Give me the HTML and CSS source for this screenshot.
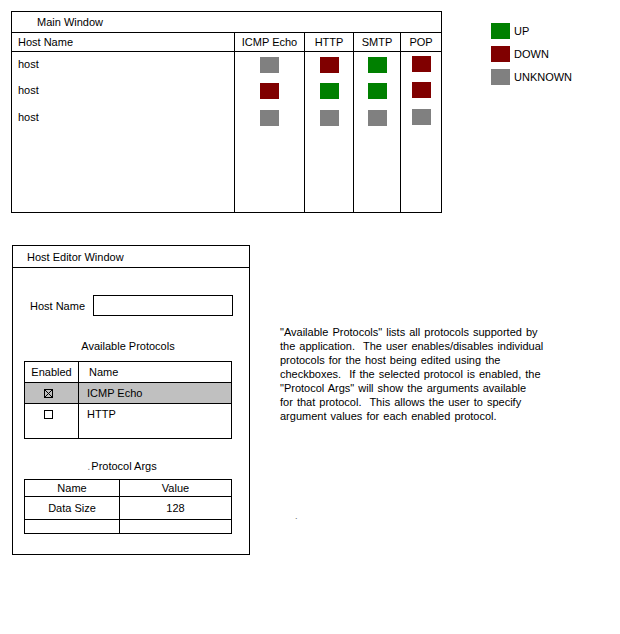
FILE: index.html
```html
<!DOCTYPE html>
<html lang="en">
<head>
    <meta charset="UTF-8">
    <title>Host Monitor Mockup</title>
    <link rel="stylesheet" href="styles.css">
</head>
<body>
    <div class="top">
        <div class="main-window">
            <div class="title main-title">Main Window</div>
            <div class="grid">
                <div class="col host-col">
                    <div class="head">Host Name</div>
                    <div class="cell">host</div>
                    <div class="cell">host</div>
                    <div class="cell">host</div>
                </div>
                <div class="col icmp-col">
                    <div class="head center">ICMP Echo</div>
                    <div class="cell center"><span class="status unknown"></span></div>
                    <div class="cell center"><span class="status down"></span></div>
                    <div class="cell center"><span class="status unknown"></span></div>
                </div>
                <div class="col http-col">
                    <div class="head center">HTTP</div>
                    <div class="cell center"><span class="status down"></span></div>
                    <div class="cell center"><span class="status up"></span></div>
                    <div class="cell center"><span class="status unknown"></span></div>
                </div>
                <div class="col smtp-col">
                    <div class="head center">SMTP</div>
                    <div class="cell center"><span class="status up"></span></div>
                    <div class="cell center"><span class="status up"></span></div>
                    <div class="cell center"><span class="status unknown"></span></div>
                </div>
                <div class="col pop-col">
                    <div class="head center">POP</div>
                    <div class="cell center"><span class="status down"></span></div>
                    <div class="cell center"><span class="status down"></span></div>
                    <div class="cell center"><span class="status unknown"></span></div>
                </div>
            </div>
        </div>

        <ul class="legend">
            <li><span class="swatch up"></span>UP</li>
            <li><span class="swatch down"></span>DOWN</li>
            <li><span class="swatch unknown"></span>UNKNOWN</li>
        </ul>
    </div>

    <div class="bottom">
        <div class="editor">
            <div class="title editor-title">Host Editor Window</div>
            <div class="editor-body">
                <div class="field">
                    <label class="field-label">Host Name</label>
                    <div class="input"></div>
                </div>

                <div class="caption protocols-caption">Available Protocols</div>
                <table class="protocols">
                    <tr class="thead">
                        <th class="enabled">Enabled</th>
                        <th class="name">Name</th>
                    </tr>
                    <tr class="selected">
                        <td class="enabled"><span class="check checked"></span></td>
                        <td class="name">ICMP Echo</td>
                    </tr>
                    <tr class="tall">
                        <td class="enabled"><span class="check"></span></td>
                        <td class="name">HTTP</td>
                    </tr>
                </table>

                <div class="caption args-caption"><span class="stray">.</span>Protocol Args</div>
                <table class="args">
                    <tr class="thead">
                        <th>Name</th>
                        <th>Value</th>
                    </tr>
                    <tr class="value-row">
                        <td>Data Size</td>
                        <td>128</td>
                    </tr>
                    <tr class="empty-row">
                        <td></td>
                        <td></td>
                    </tr>
                </table>
            </div>
        </div>

        <div class="notes">
            <p>
                "Available Protocols" lists all protocols supported by<br>
                the application.&nbsp; The user enables/disables individual<br>
                protocols for the host being edited using the<br>
                checkboxes.&nbsp; If the selected protocol is enabled, the<br>
                "Protocol Args" will show the arguments available<br>
                for that protocol.&nbsp; This allows the user to specify<br>
                argument values for each enabled protocol.
            </p>
            <span class="speck">.</span>
        </div>
    </div>
</body>
</html>
```

FILE: styles.css
```css
body {
    margin: 0;
    font-family: "Liberation Sans", Arial, sans-serif;
    font-size: 11px;
    line-height: 14px;
    color: #000;
    background: #fff;
}

/* status colours */
.up { background: #008000; }
.down { background: #800000; }
.unknown { background: #808080; }

.top {
    display: flex;
    align-items: flex-start;
    padding: 11px 0 0 11px;
}

.main-window {
    box-sizing: border-box;
    width: 431px;
    height: 202px;
    border: 1px solid #000;
    display: flex;
    flex-direction: column;
}
.title {
    height: 20px;
    line-height: 20px;
    border-bottom: 1px solid #000;
}
.main-title {
    padding-left: 25px;
}
.grid {
    flex: 1;
    display: flex;
}
.col {
    box-sizing: border-box;
}
.col + .col {
    border-left: 1px solid #000;
}
.host-col { width: 222px; }
.icmp-col { width: 70px; }
.http-col { width: 49px; }
.smtp-col { width: 47px; }
.pop-col { width: 41px; }

.head {
    height: 18px;
    line-height: 18px;
    border-bottom: 1px solid #000;
    padding-left: 6px;
}
.head.center {
    padding-left: 0;
    text-align: center;
}
.cell {
    height: 26px;
    line-height: 24px;
    padding-left: 6px;
}
.cell:last-child {
    height: 27px;
    line-height: 26px;
}
.cell.center {
    padding-left: 0;
    display: flex;
    justify-content: center;
    align-items: flex-start;
}
.status {
    display: block;
    width: 19px;
    height: 16px;
    margin-top: 5px;
}
.cell:nth-child(4) .status {
    margin-top: 6px;
}
.pop-col .status {
    margin-top: 4px;
}
.pop-col .cell:nth-child(4) .status {
    margin-top: 5px;
}

.legend {
    list-style: none;
    margin: 12px 0 0 49px;
    padding: 0;
}
.legend li {
    display: flex;
    align-items: center;
    height: 16px;
    margin-bottom: 7px;
}
.legend li:last-child {
    margin-top: 1px;
}
.swatch {
    display: block;
    width: 19px;
    height: 16px;
    margin-right: 4px;
}

.bottom {
    display: flex;
    align-items: flex-start;
    margin: 32px 0 0 12px;
}

.editor {
    box-sizing: border-box;
    width: 238px;
    height: 310px;
    border: 1px solid #000;
}
.editor-title {
    height: 21px;
    line-height: 23px;
    padding-left: 14px;
}
.editor-body {
    padding: 0 16px 0 11px;
}

.field {
    display: flex;
    align-items: center;
    margin-top: 27px;
}
.field-label {
    width: 63px;
    padding-left: 6px;
}
.input {
    box-sizing: border-box;
    width: 140px;
    height: 21px;
    border: 1px solid #000;
}

.caption {
    width: 208px;
    text-align: center;
}
.protocols-caption {
    margin-top: 23px;
    margin-bottom: 8px;
}
.args-caption {
    margin-top: 20px;
    margin-bottom: 6px;
    padding-right: 12px;
    box-sizing: border-box;
}
.stray {
    color: #777;
    margin-right: 1px;
}

table {
    width: 208px;
    border-collapse: collapse;
    table-layout: fixed;
}
th, td {
    border: 1px solid #000;
    padding: 0;
    font-weight: normal;
}

.protocols th.enabled,
.protocols td.enabled {
    width: 53px;
    text-align: center;
}
.protocols th.name,
.protocols td.name {
    text-align: left;
    padding-left: 10px;
}
.protocols td.name {
    padding-left: 8px;
}
.protocols .thead th {
    height: 20px;
}
.protocols .selected td {
    height: 20px;
    background: #c0c0c0;
}
.protocols .tall td {
    height: 34px;
    vertical-align: top;
    line-height: 20px;
}
.check {
    display: inline-block;
    box-sizing: border-box;
    width: 9px;
    height: 9px;
    border: 1px solid #000;
    vertical-align: -1px;
    margin-right: 6px;
}
.check.checked {
    background:
        linear-gradient(45deg, transparent 45%, #000 45%, #000 55%, transparent 55%),
        linear-gradient(-45deg, transparent 45%, #000 45%, #000 55%, transparent 55%);
}

.args th:first-child,
.args td:first-child {
    width: 94px;
}
.args th, .args td {
    text-align: center;
}
.args .thead th {
    height: 16px;
}
.args .value-row td {
    height: 22px;
}
.args .empty-row td {
    height: 13px;
}

.notes {
    margin: 80px 0 0 30px;
}
.notes p {
    margin: 0;
    white-space: nowrap;
    word-spacing: 1px;
}
.speck {
    display: block;
    margin: 88px 0 0 15px;
    color: #666;
    font-size: 9px;
    line-height: 10px;
}
```
